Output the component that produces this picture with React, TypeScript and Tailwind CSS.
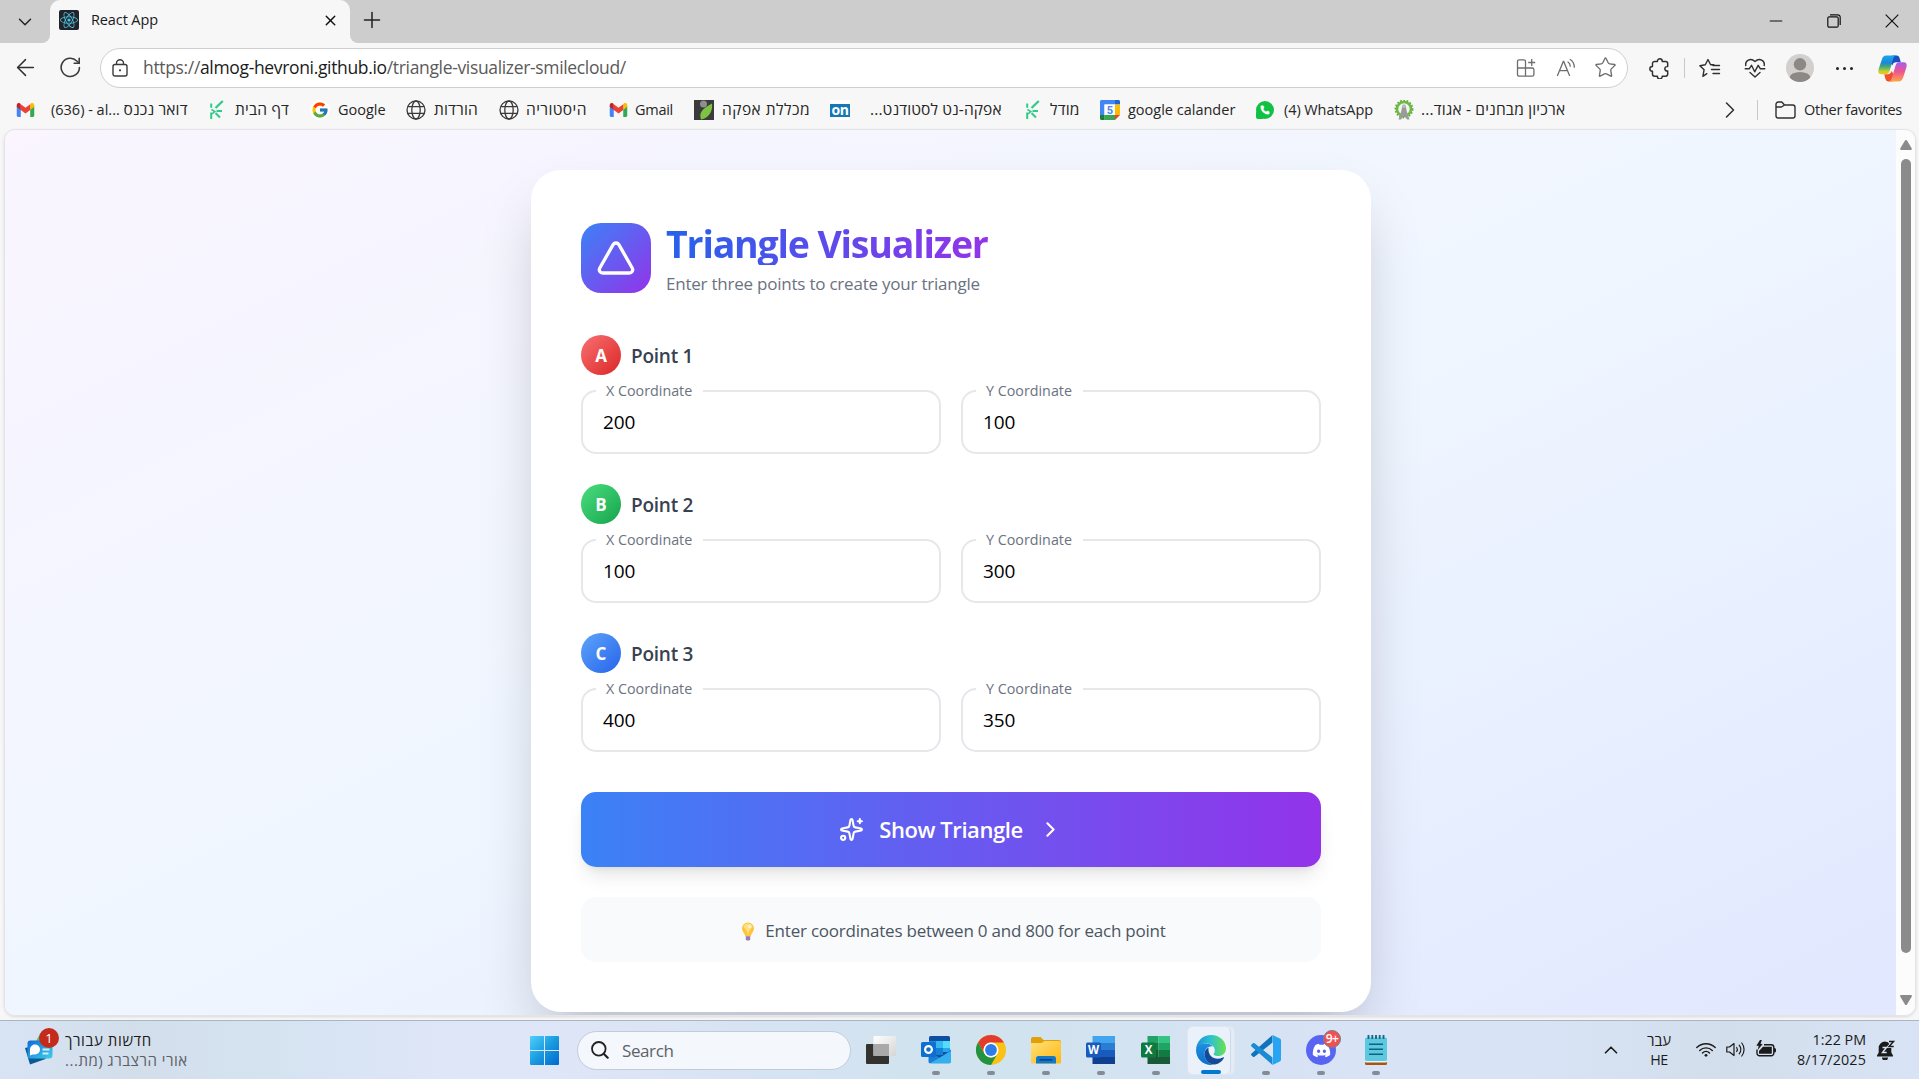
import type { ReactNode } from "react";
import { ArrowLeft, ChevronDown, ChevronRight, ChevronUp, Minus, Phone, Plus, Sparkles, Star, Triangle, X } from "lucide-react";
import { FcGoogle } from "react-icons/fc";
import { FaReact, FaDiscord } from "react-icons/fa";

/* ---------- small icons ---------- */

function GmailIcon() {
  return (
    <svg viewBox="0 0 20 16" className="h-[14px] w-[19px]">
      <path d="M0 3.5V14.4C0 15.3.7 16 1.5 16H4.6V6.5Z" fill="#4285f4" />
      <path d="M20 3.5V14.4c0 .9-.7 1.6-1.5 1.6h-3.1V6.5Z" fill="#34a853" />
      <path d="M15.4 1.4V8L20 4.4V2.3C20 .4 17.700-.7 16.200.5Z" fill="#fbbc04" />
      <path d="M4.600 8V1.400L10 5.500l5.400-4.100V8L10 12.100Z" fill="#ea4335" />
      <path d="M0 2.300v2.100L4.600 8V1.400L3.800.700C2.200-.6 0 .4 0 2.300Z" fill="#c5221f" />
    </svg>
  );
}

function SproutIcon() {
  return (
    <svg viewBox="0 0 16 20" className="h-[20px] w-[16px]" fill="none" stroke="#2ecc86">
      <path d="M13.800 1 6.500 8" strokeWidth="2.300" />
      <path d="M2.200 3.500v4.300M2.200 12.500v6.500" strokeWidth="2" />
      <path d="M7.500 11h5.500M6.500 13l4.500 4.500" strokeWidth="2" />
      <path d="M2.500 9.500 5.800 11.500 3 14" strokeWidth="1.600" />
    </svg>
  );
}

function GlobeIcon() {
  return (
    <svg viewBox="0 0 20 20" className="size-[20px]" fill="none" stroke="#3a3a3a" strokeWidth="1.300">
      <circle cx="10" cy="10" r="9" />
      <ellipse cx="10" cy="10" rx="4.200" ry="9" />
      <path d="M2 6.600h16M2 13.400h16" />
    </svg>
  );
}

function LeafIcon() {
  return (
    <svg viewBox="0 0 20 20" className="size-[20px]">
      <rect width="20" height="20" fill="#3b3b3b" />
      <circle cx="9.500" cy="4" r="3.500" fill="#8e8e8e" />
      <path d="M18 3.500C19 11 15 18 7 19.500 4.500 12 9 8.500 18 3.500Z" fill="#7dc242" />
    </svg>
  );
}

function OnIcon() {
  return (
    <span className="flex h-[20px] w-[20px] items-center bg-white">
      <span className="flex h-[13px] w-[20px] items-center justify-center bg-[#1579b8] pb-px text-[14px] leading-none font-bold tracking-[-0.5px] text-white">on</span>
    </span>
  );
}

function CalendarIcon() {
  return (
    <svg viewBox="0 0 20 20" className="size-[20px]">
      <path d="M1.500 0H15v4.500H4.500V15H0V1.500C0 .7.700 0 1.500 0Z" fill="#4285f4" />
      <path d="M15 0h3.500c.8 0 1.500.700 1.500 1.500V4.500h-5Z" fill="#1967d2" />
      <path d="M15 4.500h5V15h-5Z" fill="#fbbc04" />
      <path d="M4.500 15H15v5H4.500Z" fill="#34a853" />
      <path d="M0 15h4.500v5h-3C.700 20 0 19.300 0 18.500Z" fill="#188038" />
      <path d="M15 15h5l-5 5Z" fill="#ea4335" />
      <rect x="4.500" y="4.500" width="10.500" height="10.500" fill="#fff" />
      <text x="9.800" y="13.600" textAnchor="middle" fontSize="11" fontWeight="700" fill="#4285f4" fontFamily="Roboto, sans-serif">5</text>
    </svg>
  );
}

function WhatsAppIcon() {
  return (
    <span className="relative flex size-[18px] items-center justify-center rounded-full bg-[#12c144]">
      <span className="absolute bottom-0 left-0 size-[8px] rounded-[2px] bg-[#12c144]" />
      <Phone className="relative size-[10px] text-white" fill="currentColor" strokeWidth={1.500} />
    </span>
  );
}

function WreathIcon() {
  return (
    <svg viewBox="0 0 20 20" className="size-[20px]">
      <circle cx="10" cy="9" r="7" fill="#f4f8f0" stroke="#6dbb45" strokeWidth="2.600" />
      <circle cx="10" cy="9" r="8.600" fill="none" stroke="#5fae3c" strokeWidth="1.600" strokeDasharray="1.800 1.500" />
      <path d="M8.300 5.500h3.400l1 5.500L15.500 19.500H13L10 15l-3 4.500H4.500L7.300 11Z" fill="#9a9a9a" />
      <circle cx="10" cy="6.200" r="1.900" fill="#bcbcbc" />
    </svg>
  );
}

function ReloadIcon() {
  return (
    <svg viewBox="0 0 20 20" className="size-[21px]" fill="none" stroke="#3b3b3b" strokeWidth="1.500" strokeLinecap="round" strokeLinejoin="round">
      <path d="M18.500 10A8.700 8.700 0 1 1 16 3.800L18.300 6" />
      <path d="M18.300 1.200V6h-4.800" />
    </svg>
  );
}

function LockIcon() {
  return (
    <svg viewBox="0 0 16 18" className="h-[18px] w-[16px]" fill="none" stroke="#3b3b3b" strokeWidth="1.400">
      <rect x="1" y="5.500" width="14" height="11.500" rx="2" />
      <path d="M4.500 5.500V4.300a3.500 3.500 0 0 1 7 0v1.200" />
      <circle cx="8" cy="11.300" r="1.100" fill="#3b3b3b" stroke="none" />
    </svg>
  );
}

function AppsIcon() {
  return (
    <svg viewBox="0 0 20 20" className="size-[20px]" fill="none" stroke="#6e6e6e" strokeWidth="1.300">
      <path d="M9.500 10V3.500A1.700 1.700 0 0 0 7.800 1.800H3.200A1.700 1.700 0 0 0 1.500 3.500v13a1.700 1.700 0 0 0 1.700 1.700h13a1.700 1.700 0 0 0 1.700-1.700v-4.800A1.700 1.700 0 0 0 16.200 10H1.500M9.500 10v8.200" />
      <path d="M15.700 1v7M12.200 4.500h7" />
    </svg>
  );
}

function ReadAloudIcon() {
  return (
    <svg viewBox="0 0 20 20" className="size-[20px]" fill="none" stroke="#6e6e6e" strokeWidth="1.300" strokeLinecap="round">
      <path d="M1.500 17.500 7.300 3.500h.4l5.800 14M3.600 12.700h7.800" />
      <path d="M12 4c1.500 1 2.200 2.400 2.300 4.200M14.200 1.500c2.700 1.700 4.100 4.500 4.100 7.700" />
    </svg>
  );
}

function PuzzleIcon() {
  return (
    <svg viewBox="0 0 20 20" className="size-[21px]" fill="none" stroke="#303030" strokeWidth="1.400" strokeLinejoin="round">
      <path d="M8 3.300V3a2.300 2.300 0 0 1 4.600 0v.300h3.200a2 2 0 0 1 2 2v2.900h-.6a2.100 2.100 0 0 0 0 4.200h.6v2.900a2 2 0 0 1-2 2h-3.200v.3a2.300 2.300 0 0 1-4.600 0v-.3H5.300a2 2 0 0 1-2-2v-2.700h-.2a2.300 2.300 0 0 1 0-4.600h.2V5.300a2 2 0 0 1 2-2Z" />
    </svg>
  );
}

function FavoritesIcon() {
  return (
    <svg viewBox="0 0 22 20" className="h-[20px] w-[22px]" fill="none" stroke="#303030" strokeWidth="1.400" strokeLinejoin="round" strokeLinecap="round">
      <path d="M7.800 15.700 3.900 18.300l1.200-6.600L.9 7.700l5.400-.9L9 1.500l2.600 5.300h3.200" />
      <path d="M14 7.500h6.500M12.500 11.500h8M14 15.500h6.500" />
    </svg>
  );
}

function HeartPulseIcon() {
  return (
    <svg viewBox="0 0 22 20" className="h-[20px] w-[22px]" fill="none" stroke="#303030" strokeWidth="1.400" strokeLinejoin="round" strokeLinecap="round">
      <path d="M1.800 7.500C.8 2.500 6.500-.7 11 3.500c4.500-4.200 10.200-1 9.200 4M6 14.500l5 4.500 5-4.500" />
      <path d="M1.200 10.800h4l2.300-3.500 3.200 6.500 3.500-6.500 2.200 3.500h4.400" />
    </svg>
  );
}

function AvatarIcon() {
  return (
    <svg viewBox="0 0 28 28" className="size-[28px]">
      <clipPath id="avatar"><circle cx="14" cy="14" r="14" /></clipPath>
      <g clipPath="url(#avatar)">
        <rect width="28" height="28" fill="#d2d0ce" />
        <circle cx="14" cy="10.300" r="6.200" fill="#8c8886" />
        <ellipse cx="14" cy="23.500" rx="10.300" ry="5.500" fill="#8c8886" />
      </g>
    </svg>
  );
}

function CopilotIcon() {
  return (
    <svg viewBox="0 0 28 26" className="h-[27px] w-[29px]">
      <defs>
        <linearGradient id="cpA" x1="0" y1="0" x2="0" y2="1">
          <stop offset="0" stopColor="#1aa7ee" /><stop offset=".4" stopColor="#1c86d8" /><stop offset=".6" stopColor="#45ab72" /><stop offset=".85" stopColor="#c5cf2e" /><stop offset="1" stopColor="#f5c518" />
        </linearGradient>
        <linearGradient id="cpB" x1="0" y1="0" x2="0" y2="1">
          <stop offset="0" stopColor="#a45cf0" /><stop offset=".5" stopColor="#f0558e" /><stop offset="1" stopColor="#fba54a" />
        </linearGradient>
      </defs>
      <path d="M14 .5h4c1.600 0 2.400 1 2.900 2.600L22 7h-4.500c-2 0-3 1-3.600 3L11.500 7Z" fill="#1b4fc4" />
      <path d="M14 25.500h-4c-1.600 0-2.400-1-2.900-2.600L6 18.500h3.500c2 0 3-1 3.600-3L16 20Z" fill="#f0502e" />
      <path d="M8 .5h9.500c-1.500.3-2.300 1.400-2.800 3l-3.500 12c-.6 2-1.700 3-3.600 3H3.200C.6 18.500-.1 16.500.5 14L3.800 4C4.500 1.700 5.800.5 8 .5Z" fill="url(#cpA)" />
      <path d="M20 25.500h-9.500c1.500-.3 2.300-1.400 2.800-3l3.500-12c.6-2 1.700-3.500 3.600-3.500h4.400c2.600 0 3.300 2 2.700 4.500L24.200 22c-.7 2.300-2 3.500-4.200 3.500Z" fill="url(#cpB)" />
    </svg>
  );
}

/* ---------- browser chrome ---------- */

function TabStrip() {
  return (
    <div className="flex h-[43px] shrink-0 bg-[#cdcdcd]">
      <div className="flex w-[50px] items-center justify-center">
        <ChevronDown className="size-[22px] text-[#222]" strokeWidth={1.600} />
      </div>
      <div className="relative flex h-[43px] w-[300px] rounded-t-[10px] bg-[#f7f7f7] pl-[9px]">
        <span className="absolute bottom-0 left-[-8px] size-[8px] bg-[#f7f7f7]"><span className="block size-full rounded-br-[8px] bg-[#cdcdcd]" /></span>
        <span className="absolute right-[-8px] bottom-0 size-[8px] bg-[#f7f7f7]"><span className="block size-full rounded-bl-[8px] bg-[#cdcdcd]" /></span>
        <span className="mt-[10px] flex size-[20px] items-center justify-center rounded-[2px] bg-[#20232a]">
          <FaReact className="size-[18px] text-[#53c1de]" />
        </span>
        <span className="ml-[12px] h-[40px] w-[67px] text-[14.5px] leading-[40px] tracking-[-0.11px] whitespace-nowrap text-[#1b1b1b]">React App</span>
        <X className="mt-[12px] ml-[164px] size-[17px] text-[#111]" strokeWidth={2} />
      </div>
      <div className="ml-[9px] flex h-[39px] items-center">
        <Plus className="size-[26px] text-[#222]" strokeWidth={1.400} />
      </div>
      <div className="ml-auto flex h-[42px] items-center pr-[20px] text-[#111]">
        <Minus className="mr-[41px] size-[20px]" strokeWidth={1.300} />
        <svg viewBox="0 0 14 14" className="mr-[44px] size-[14px]" fill="none" stroke="currentColor" strokeWidth="1.200">
          <rect x=".8" y="2.800" width="10.400" height="10.400" rx="1.500" />
          <path d="M3 .8h7.700a2.500 2.500 0 0 1 2.500 2.500V11" />
        </svg>
        <svg viewBox="0 0 14 14" className="size-[14px]" stroke="currentColor" strokeWidth="1.200"><path d="m.7.700 12.600 12.600M13.300.7.700 13.300" /></svg>
      </div>
    </div>
  );
}

function Toolbar() {
  return (
    <div className="flex h-[50px] shrink-0 items-center pl-[12px]">
      <ArrowLeft className="mb-px size-[27px] text-[#303030]" strokeWidth={1.300} />
      <span className="mb-px ml-[21px]"><ReloadIcon /></span>
      <div className="ml-[19px] flex h-[40px] w-[1528px] items-center rounded-full border border-[#cfcfcf] bg-white pb-px pl-[11px]">
        <LockIcon />
        <span className="ml-[15px] grow text-[17.5px] tracking-[-0.34px] whitespace-nowrap text-[#5a5a5a]">
          https://<span className="text-[#1b1b1b]">almog-hevroni.github.io</span>/triangle-visualizer-smilecloud/
        </span>
        <AppsIcon />
        <span className="ml-[20px]"><ReadAloudIcon /></span>
        <Star className="mr-[10px] ml-[18px] size-[23px] text-[#6e6e6e]" strokeWidth={1.400} />
      </div>
      <span className="ml-[21px]"><PuzzleIcon /></span>
      <span className="ml-[14px] h-[20px] w-px bg-[#c8c8c8]" />
      <span className="ml-[14px]"><FavoritesIcon /></span>
      <span className="ml-[23px]"><HeartPulseIcon /></span>
      <span className="ml-[20px]"><AvatarIcon /></span>
      <span className="ml-[22px] flex w-[17px] justify-between">
        <i className="size-[3px] rounded-full bg-[#222]" /><i className="size-[3px] rounded-full bg-[#222]" /><i className="size-[3px] rounded-full bg-[#222]" />
      </span>
      <span className="ml-[25px]"><CopilotIcon /></span>
    </div>
  );
}

type Bookmark = { icon: ReactNode; text: ReactNode; slot: string; label: string };

const bookmarks: Bookmark[] = [
  { icon: <GmailIcon />, text: <>(636) - al... <span className="text-[15.5px] tracking-[0.15px]">דואר נכנס</span></>, slot: "w-[192px]", label: "ml-[16px]" },
  { icon: <SproutIcon />, text: "דף הבית", slot: "w-[103px]", label: "ml-[8px] text-[15.5px] tracking-[0.2px]" },
  { icon: <span className="flex size-[20px] items-center justify-center rounded-full bg-white"><FcGoogle className="size-[18px]" /></span>, text: "Google", slot: "w-[96px]", label: "ml-[8px]" },
  { icon: <GlobeIcon />, text: "הורדות", slot: "w-[93px]", label: "ml-[8px] text-[15.5px] tracking-[0.16px]" },
  { icon: <GlobeIcon />, text: "היסטוריה", slot: "w-[109px]", label: "ml-[7px] text-[15.5px] tracking-[0.4px]" },
  { icon: <GmailIcon />, text: "Gmail", slot: "w-[86px]", label: "ml-[7px] tracking-[-0.27px]" },
  { icon: <LeafIcon />, text: "מכללת אפקה", slot: "w-[136px]", label: "ml-[8px] text-[15.5px] tracking-[0.47px]" },
  { icon: <OnIcon />, text: "אפקה-נט לסטודנט...", slot: "w-[193px]", label: "ml-[20px] text-[15.5px] tracking-[0.12px]" },
  { icon: <SproutIcon />, text: "מודל", slot: "w-[77px]", label: "ml-[7px] text-[15.5px] tracking-[0.2px]" },
  { icon: <CalendarIcon />, text: "google calander", slot: "w-[155px]", label: "ml-[8px]" },
  { icon: <WhatsAppIcon />, text: "(4) WhatsApp", slot: "w-[139px]", label: "ml-[9px] tracking-[-0.08px]" },
  { icon: <WreathIcon />, text: "ארכיון מבחנים - אגוד...", slot: "w-[200px]", label: "ml-[7px] text-[15.5px] tracking-[0.19px]" },
];

function BookmarksBar() {
  return (
    <div className="flex h-[36px] shrink-0 items-center pb-[2px] pl-[15px] text-[14.5px] whitespace-nowrap text-[#262626]">
      {bookmarks.map((b, i) => (
        <div key={i} className={`flex shrink-0 items-center ${b.slot}`}>
          <span className="flex w-[20px] shrink-0 justify-center">{b.icon}</span>
          <span dir="auto" className={b.label}>{b.text}</span>
        </div>
      ))}
      <div className="ml-auto flex items-center pr-[17px]">
        <ChevronRight className="size-[28px] text-[#303030]" strokeWidth={1.300} />
        <span className="ml-[13px] h-[20px] w-px bg-[#c8c8c8]" />
        <svg viewBox="0 0 21 18" className="mr-[8px] ml-[17px] h-[18px] w-[21px]" fill="none" stroke="#303030" strokeWidth="1.400" strokeLinejoin="round">
          <path d="M1 4V3.200A2.200 2.200 0 0 1 3.200 1h3.600l2.700 3h8.300A2.200 2.200 0 0 1 20 6.200v8.600a2.200 2.200 0 0 1-2.200 2.200H3.200A2.200 2.200 0 0 1 1 14.800V4ZM1 6h5.500l3-2" />
        </svg>
        <span className="w-[98px] tracking-[-0.26px]">Other favorites</span>
      </div>
    </div>
  );
}

/* ---------- page ---------- */

function CoordinateField({ label, value }: { label: string; value: number }) {
  return (
    <div className="relative flex h-[64px] w-[360px] items-center rounded-[15px] border-2 border-[#e5e7eb] bg-white pt-[1px] pl-[20px]">
      <span className="absolute top-[-12px] left-[13px] w-[107px] bg-white pl-[10px] text-[14.3px] leading-[22px] whitespace-nowrap text-[#6b7280]">{label}</span>
      <span className="text-[19px] tracking-[-0.1px] text-black">{value}</span>
    </div>
  );
}

const points = [
  { letter: "A", name: "Point 1", x: 200, y: 100, color: "bg-linear-to-br/srgb from-[#f87171] to-[#dc2626]" },
  { letter: "B", name: "Point 2", x: 100, y: 300, color: "bg-linear-to-br/srgb from-[#4ade80] to-[#16a34a]" },
  { letter: "C", name: "Point 3", x: 400, y: 350, color: "bg-linear-to-br/srgb from-[#60a5fa] to-[#2563eb]" },
];

function Bulb() {
  return (
    <svg viewBox="0 0 24 20" className="h-[20px] w-[24px]">
      <path d="M12 1.500a6 6 0 0 0-6 6c0 3 2.800 4.800 3.400 8h5.200c.6-3.200 3.400-5 3.400-8a6 6 0 0 0-6-6Z" fill="#fcc53c" />
      <path d="M12 2.500a5 5 0 0 0-4.500 3c1 3 3.500 2 4.500 9 1-7 3.500-6 4.500-9a5 5 0 0 0-4.500-3Z" fill="#ffdf7e" />
      <circle cx="13.500" cy="5.500" r="1.600" fill="#fff6d5" />
      <path d="M9.800 15.300h4.400v3c0 .7-.6 1.200-1.300 1.200h-1.800c-.7 0-1.300-.5-1.300-1.200Z" fill="#9a7bb5" />
    </svg>
  );
}

function TriangleCard() {
  return (
    <div className="h-[842px] w-[840px] shrink-0 rounded-[30px] bg-white px-[50px] pt-[53px] shadow-[0_31px_62px_-15px_rgba(0,0,0,0.25)]">
      <div className="flex h-[70px]">
        <div className="flex size-[70px] items-center justify-center rounded-[20px] bg-linear-to-br/srgb from-[#3b82f6] to-[#9333ea]">
          <Triangle className="size-[40px] text-white" strokeWidth={2} />
        </div>
        <div className="mt-[-1px] ml-[15px] w-[322px]">
          <h1 className="h-[43px] bg-linear-to-r/srgb from-[#2563eb] to-[#9333ea] bg-clip-text text-[37.5px] leading-[44px] font-bold tracking-[-1.18px] whitespace-nowrap text-transparent">Triangle Visualizer</h1>
          <p className="mt-[6px] text-[17px] leading-[26px] tracking-[-0.225px] whitespace-nowrap text-[#6b7280]">Enter three points to create your triangle</p>
        </div>
      </div>
      <div className="mt-[42px] flex flex-col gap-[30px]">
        {points.map((p) => (
          <div key={p.letter}>
            <div className="flex h-[40px] items-center gap-[10px]">
              <span className={`flex size-[40px] items-center justify-center rounded-full pt-[2px] text-[17px] font-bold text-white ${p.color}`}>{p.letter}</span>
              <span className="pt-[2px] text-[19px] font-semibold tracking-[-0.25px] text-[#374151]">{p.name}</span>
            </div>
            <div className="mt-[15px] flex gap-[20px]">
              <CoordinateField label="X Coordinate" value={p.x} />
              <CoordinateField label="Y Coordinate" value={p.y} />
            </div>
          </div>
        ))}
      </div>
      <button className="mt-[40px] flex h-[75px] w-full items-center justify-center rounded-[15px] bg-linear-to-r/srgb from-[#3b82f6] to-[#9333ea] text-white shadow-[0_12px_19px_-4px_rgba(0,0,0,0.1),0_5px_8px_-5px_rgba(0,0,0,0.1)]">
        <Sparkles className="size-[25px]" strokeWidth={2} />
        <span className="ml-[15px] text-[22px] font-semibold tracking-[-0.42px]">Show Triangle</span>
        <ChevronRight className="ml-[15px] size-[25px]" strokeWidth={2} />
      </button>
      <div className="mt-[30px] flex h-[65px] items-center justify-center rounded-[15px] bg-[#f9fafb] pt-[2px]">
        <Bulb />
        <span className="ml-[5px] text-[17px] tracking-[-0.22px] text-[#4b5563]">Enter coordinates between 0 and 800 for each point</span>
      </div>
    </div>
  );
}

function Viewport() {
  return (
    <div className="mr-[3px] ml-[4px] flex h-[887px] shrink-0 overflow-hidden rounded-[11px] border border-[#e3e3e8] shadow-[0_1px_3px_rgba(0,0,0,0.12)]">
      <div className="h-[885px] grow overflow-hidden">
        <div className="flex h-[922px] justify-center bg-linear-to-br/srgb from-[#faf5ff] via-[#eff6ff] to-[#e0e7ff] pt-[40px] pl-px">
          <TriangleCard />
        </div>
      </div>
      <div className="flex w-[19px] flex-col items-center justify-between bg-[#fcfcfc] py-[10px]">
        <svg viewBox="0 0 12 10" className="h-[10px] w-[12px]"><path d="M6 0c.5 0 .8.200 1 .6l4.800 8c.3.700 0 1.400-.8 1.400H1c-.8 0-1.100-.7-.8-1.400l4.800-8C5.200.2 5.500 0 6 0Z" fill="#8b8b8b" /></svg>
        <div className="mt-[9px] mb-auto h-[794px] w-[10px] rounded-full bg-[#8b8b8b]" />
        <svg viewBox="0 0 12 10" className="h-[10px] w-[12px]"><path d="M6 10c.5 0 .8-.2 1-.6l4.800-8C12.100.7 11.800 0 11 0H1C.2 0-.1.700.2 1.400l4.800 8c.2.400.5.600 1 .6Z" fill="#8b8b8b" /></svg>
      </div>
    </div>
  );
}

/* ---------- taskbar ---------- */

function NewsIcon() {
  return (
    <svg viewBox="0 0 40 36" className="h-[36px] w-[40px]">
      <defs>
        <linearGradient id="newsA" x1="0" y1="0" x2="1" y2="1"><stop offset="0" stopColor="#0f6cd6" /><stop offset="1" stopColor="#3fd0e8" /></linearGradient>
      </defs>
      <path d="m14 12 4-7 8 5-2 8H14Z" fill="#5fc06a" />
      <path d="m3 19 4-1 3 9 14 1.500-.5 1.500L8 35.500Z" fill="#0b5a93" />
      <rect x="5.500" y="11.500" width="25" height="18" rx="3" fill="url(#newsA)" />
      <path d="M8 26.500v-6a5 5 0 1 1 5 5h-2.500Z" fill="#fff" />
      <path d="M20.500 20.500h7M20.500 24.500h6" stroke="#c9f1fb" strokeWidth="1.800" />
    </svg>
  );
}

function StartIcon() {
  return (
    <svg viewBox="0 0 29 29" className="size-[29px]">
      <defs>
        <linearGradient id="start" x1="0" y1="0" x2="29" y2="29" gradientUnits="userSpaceOnUse"><stop offset="0" stopColor="#4fd0fb" /><stop offset=".5" stopColor="#199be0" /><stop offset="1" stopColor="#0168ce" /></linearGradient>
      </defs>
      <path d="M1 0h13v14H0V1a1 1 0 0 1 1-1ZM15 0h13a1 1 0 0 1 1 1v13H15ZM0 15h14v14H1a1 1 0 0 1-1-1ZM15 15h14v13a1 1 0 0 1-1 1H15Z" fill="url(#start)" />
    </svg>
  );
}

function TaskViewIcon() {
  return (
    <svg viewBox="0 0 30 28" className="h-[28px] w-[30px]">
      <defs>
        <linearGradient id="tv" x1="0" y1="0" x2="1" y2="1"><stop offset="0" stopColor="#fff" /><stop offset="1" stopColor="#d5d5d5" /></linearGradient>
      </defs>
      <rect x="0" y="8" width="23" height="20" rx="1" fill="#33322f" />
      <rect x="7.500" y="0" width="22.500" height="20" rx="1" fill="url(#tv)" />
      <rect x="7.500" y="8" width="15.500" height="12" fill="#a9a9a9" />
    </svg>
  );
}

function OutlookIcon() {
  return (
    <svg viewBox="0 0 30 30" className="size-[30px]">
      <rect x="8" y="1" width="21" height="27" rx="1.500" fill="#0f4fa0" />
      <path d="M8 6h7v7H8z" fill="#1a8ae0" /><path d="M15 6h7v7h-7z" fill="#35b8f1" /><path d="M22 6h7v7h-7z" fill="#55dcfb" />
      <path d="M8 13h7v7H8z" fill="#0d62b8" /><path d="M15 13h7v7h-7z" fill="#1480d8" /><path d="M22 13h7v4h-7z" fill="#2aa5ea" />
      <path d="M7.500 16 19 23l11-8.500V26.500a1.700 1.700 0 0 1-1.700 1.700H9a1.500 1.500 0 0 1-1.500-1.500Z" fill="#1a7ed6" />
      <path d="M9 28.200 30 16v10.500a1.700 1.700 0 0 1-1.700 1.700Z" fill="#35b0ee" />
      <rect x="0" y="7" width="15" height="15" rx="1.500" fill="#0f6fd0" />
      <circle cx="7.500" cy="14.500" r="3.400" fill="none" stroke="#fff" strokeWidth="2.200" />
    </svg>
  );
}

function ChromeIcon() {
  return (
    <svg viewBox="0 0 30 30" className="size-[30px]">
      <circle cx="15" cy="15" r="15" fill="#fbc116" />
      <path d="M15 0A15 15 0 0 1 28 7.500H15A7.500 7.500 0 0 0 8.500 18.750L2 7.500A15 15 0 0 1 15 0Z" fill="#e33b2e" />
      <path d="M2 7.500 8.500 18.750A7.500 7.500 0 0 0 21.500 18.750L15 30A15 15 0 0 1 2 7.500Z" fill="#229342" />
      <circle cx="15" cy="15" r="7.500" fill="#fff" /><circle cx="15" cy="15" r="5.900" fill="#2f7be8" />
    </svg>
  );
}

function ExplorerIcon() {
  return (
    <svg viewBox="0 0 30 27" className="h-[27px] w-[30px]">
      <defs><linearGradient id="fold" x1="0" y1="0" x2="1" y2="1"><stop offset="0" stopColor="#ffe07a" /><stop offset="1" stopColor="#fdb813" /></linearGradient></defs>
      <path d="M0 2C0 .9.900 0 2 0h7.500l3 3H28a2 2 0 0 1 2 2v5H0Z" fill="#e0a008" />
      <path d="M0 6h10.500l3-2H28a2 2 0 0 1 2 2v19a1.500 1.500 0 0 1-1.500 1.500h-27A1.500 1.500 0 0 1 0 25Z" fill="url(#fold)" />
      <path d="M5 26.500v-5A2.500 2.500 0 0 1 7.500 19h15a2.500 2.500 0 0 1 2.500 2.500v5Z" fill="#1279c8" />
      <path d="M8.500 22.800h13" stroke="#0a3f86" strokeWidth="1.500" />
    </svg>
  );
}

function WordIcon() {
  return (
    <svg viewBox="0 0 30 28" className="h-[28px] w-[30px]">
      <path d="M6.500 0h22.500v7H6.500z" fill="#41a5ee" /><path d="M6.500 7h22.500v7H6.500z" fill="#2b7cd3" />
      <path d="M6.500 14h22.500v7H6.500z" fill="#185abd" /><path d="M6.500 21h22.500v7H6.500z" fill="#103f91" />
      <rect x="0" y="6.500" width="15" height="15" rx="1.500" fill="#185abd" />
      <text x="7.500" y="18" textAnchor="middle" fontSize="11.500" fontWeight="700" fill="#fff" fontFamily="Open Sans, sans-serif">W</text>
    </svg>
  );
}

function ExcelIcon() {
  return (
    <svg viewBox="0 0 30 28" className="h-[28px] w-[30px]">
      <path d="M6.500 0h11v7h-11z" fill="#21a366" /><path d="M17.500 0h11.500v7H17.500z" fill="#33c481" />
      <path d="M6.500 7h11v7h-11z" fill="#107c41" /><path d="M17.500 7h11.500v7H17.500z" fill="#21a366" />
      <path d="M6.500 14h11v7h-11z" fill="#185c37" /><path d="M17.500 14h11.500v7H17.500z" fill="#107c41" />
      <path d="M6.500 21h22.500v7H6.500z" fill="#185c37" />
      <rect x="0" y="6.500" width="15" height="15" rx="1.500" fill="#0f7a40" />
      <text x="7.500" y="18" textAnchor="middle" fontSize="11.500" fontWeight="700" fill="#fff" fontFamily="Open Sans, sans-serif">X</text>
    </svg>
  );
}

function EdgeIcon() {
  return (
    <svg viewBox="0 0 30 30" className="size-[30px]">
      <defs>
        <linearGradient id="edA" x1="0" y1=".4" x2="1" y2=".4"><stop offset="0" stopColor="#1b8fd8" /><stop offset=".5" stopColor="#2fc2cf" /><stop offset="1" stopColor="#6be24a" /></linearGradient>
        <linearGradient id="edB" x1="0" y1="0" x2="0" y2="1"><stop offset="0" stopColor="#1d8fe0" /><stop offset="1" stopColor="#0c6fce" /></linearGradient>
      </defs>
      <path d="M0 14.500C.5 6 7 0 15 0c9 0 15 6.500 15 13.200 0 5-3.800 7.800-8 7.800-3.500 0-4.700-1.400-4.300-2.300.8-1 1.100-2 1.100-3.200C18.800 11 14.500 8.500 10 8.500 5 8.500 1.500 11 0 14.500Z" fill="url(#edA)" />
      <path d="M0 15c.5-4.500 5-6.500 9.500-6.500 3 0 6 1 7.700 3-5-1-8.700 3-8.700 7.500 0 5.500 4 9.700 9 10.800C7.500 31 0 24 0 15Z" fill="url(#edB)" />
      <path d="M12.500 12.500c-2.500 1.500-4 3.800-4 6.500 0 6 5 11 10.500 10.500 4-.7 7-3.200 8.800-6.300.4-.8-.3-1.200-1-.8-6 3.100-15.300.6-14.300-9.900Z" fill="#124a97" />
    </svg>
  );
}

function VsCodeIcon() {
  return (
    <svg viewBox="0 0 30 30" className="size-[30px]">
      <path d="M21.500 7.500 3.500 21.800c-.5.400-1 .4-1.500 0L.5 20.400c-.6-.5-.6-1.200 0-1.800L21.500 0Z" fill="#0f74ba" />
      <path d="M21.500 22.500 3.500 8.200c-.5-.4-1-.4-1.500 0L.5 9.600c-.6.500-.6 1.200 0 1.800L21.500 30Z" fill="#1a8ad4" />
      <path d="M21.500 30 28.800 26.500c.7-.4 1.200-1 1.200-1.900V5.400c0-.9-.5-1.500-1.200-1.900L21.500 0c.4.300.5.700.5 1.200v27.600c0 .5-.1.900-.5 1.200Z" fill="#27a4f2" />
    </svg>
  );
}

function DiscordIcon() {
  return (
    <span className="relative flex size-[30px] items-center justify-center rounded-full bg-[#5865f2]">
      <FaDiscord className="size-[19px] text-white" />
      <span className="absolute top-[-5px] left-[17px] flex size-[18px] items-center justify-center rounded-full border border-[#7d7d85] bg-[#ef5152] text-[12px] leading-none font-semibold tracking-[-0.5px] text-white">9+</span>
    </span>
  );
}

function NotepadIcon() {
  return (
    <svg viewBox="0 0 22 30" className="h-[30px] w-[22px]">
      <rect x="0" y="24" width="22" height="6" rx="1.500" fill="#a4550e" />
      <rect x="0" y="22" width="22" height="5.500" rx="1" fill="#f2f2f2" />
      <rect x="0" y="2.500" width="22" height="23.500" rx="1.500" fill="#5cc9e0" />
      <path d="M3.500 0v4M7.300 0v4M11 0v4M14.700 0v4M18.500 0v4" stroke="#146a86" strokeWidth="1.900" />
      <path d="M4 9.200h14M4 14.200h14M4 19.200h14" stroke="#10627d" strokeWidth="1.500" />
    </svg>
  );
}

const apps: { icon: ReactNode; active?: boolean }[] = [
  { icon: <OutlookIcon /> },
  { icon: <ChromeIcon /> },
  { icon: <ExplorerIcon /> },
  { icon: <WordIcon /> },
  { icon: <ExcelIcon /> },
  { icon: <EdgeIcon />, active: true },
  { icon: <VsCodeIcon /> },
  { icon: <DiscordIcon /> },
  { icon: <NotepadIcon /> },
];

function TrayIcons() {
  return (
    <div className="flex items-center text-[#1b1b1b]">
      <svg viewBox="0 0 20 15" className="mb-px h-[15px] w-[20px]" fill="none" stroke="currentColor" strokeWidth="1.400" strokeLinecap="round">
        <path d="M.8 5.600a13 13 0 0 1 18.400 0M3.700 8.400a9 9 0 0 1 12.600 0M6.500 11a5 5 0 0 1 7 0" />
        <circle cx="10" cy="13.300" r="1.400" fill="currentColor" stroke="none" />
      </svg>
      <svg viewBox="0 0 20 16" className="mb-px ml-[10px] h-[17px] w-[20px]" fill="none" stroke="currentColor" strokeWidth="1.200" strokeLinecap="round" strokeLinejoin="round">
        <path d="M.8 5.500v5h2.700L8 14V2L3.500 5.500Z" />
        <path d="M10.700 6a3.500 3.500 0 0 1 0 4M13.200 3.700a7 7 0 0 1 0 8.600M15.800 1.500a10.500 10.500 0 0 1 0 13" />
      </svg>
      <svg viewBox="0 0 20 17" className="mb-[3px] ml-[10px] h-[17px] w-[20px]">
        <path d="M8 4.700h7.300a2.500 2.500 0 0 1 2.500 2.500v6a2.500 2.500 0 0 1-2.500 2.500H3.500A2.500 2.500 0 0 1 1 13.200V9.500" fill="none" stroke="currentColor" strokeWidth="1.400" />
        <path d="M3 13.700V11l4-4.300h8.800v7Z" fill="currentColor" />
        <path d="M18 8h.5A1.500 1.500 0 0 1 20 9.500V11a1.500 1.500 0 0 1-1.500 1.500H18Z" fill="currentColor" />
        <path d="M4 0 .3 5.700h2.400L1.700 10 6.700 4H4.500L5.800 0Z" fill="currentColor" />
      </svg>
    </div>
  );
}

function Taskbar() {
  return (
    <div className="flex h-[59px] shrink-0 items-center border-t border-[#abb4c3] bg-[linear-gradient(90deg,#d8e4f4_0%,#d3deeb_7%,#d5e3f1_14%,#dfe6f8_24%,#dfe6f7_28%,#d6e3f3_40%,#d0e3ee_50%,#d4e3f1_60%,#d8e3f5_70%,#d8e4f5_80%,#d3deec_90%,#d8e4f5_100%)] text-[#1b1b1b]">
      <div className="flex w-[530px] items-center pl-[22px]">
        <span className="relative mt-[-6px]">
          <NewsIcon />
          <span className="absolute top-[-1px] left-[17px] flex size-[20px] items-center justify-center rounded-full bg-[#c42b1c] text-[13px] leading-none text-white">1</span>
        </span>
        <div className="mb-px ml-[3px] w-[123px] text-left text-[15px] leading-[20px] whitespace-nowrap">
          <div className="tracking-[0.6px]">חדשות עבורך</div>
          <div dir="rtl" className="text-left tracking-[0.52px] text-[#5b6068]">אורי הרצברג (מת...</div>
        </div>
      </div>
      <StartIcon />
      <div className="ml-[18px] flex h-[39px] w-[274px] items-center rounded-full border border-[#c3cbdb] bg-[#f4f7fc] pl-[13px]">
        <svg viewBox="0 0 18 18" className="size-[18px]" fill="none" stroke="#222" strokeLinecap="round">
          <circle cx="7.800" cy="7.800" r="6.800" strokeWidth="1.800" /><path d="m12.700 12.700 4 4" strokeWidth="2.200" />
        </svg>
        <span className="ml-[13px] pt-px text-[17px] tracking-[-0.4px] text-[#5f6167]">Search</span>
      </div>
      <span className="ml-[15px]"><TaskViewIcon /></span>
      <div className="ml-[16px] flex gap-[7px]">
        {apps.map((a, i) => (
          <div key={i} className={a.active ? "relative flex h-[49px] w-[48px] items-center justify-center rounded-[5px] border border-[#dfe6f2] bg-[#e3ebf6]" : "relative flex h-[49px] w-[48px] items-center justify-center"}>
            {a.active && <span className="absolute inset-y-0 left-0 w-[43px] rounded-[5px] border-r border-[#cfd9e8] bg-[#ebf1fa]" />}
            <span className={a.active ? "relative -ml-[1px] flex" : "flex"}>{a.icon}</span>
            <span className={a.active ? "absolute bottom-0 left-[13px] h-[4px] w-[20px] rounded-full bg-[#0078d4]" : "absolute bottom-0 left-[20px] h-[4px] w-[8px] rounded-full bg-[#838b95]"} />
          </div>
        ))}
      </div>
      <div className="ml-auto flex items-center pr-[24px] text-[14.3px] leading-[20px]">
        <ChevronUp className="mr-[23px] size-[22px]" strokeWidth={1.800} />
        <div className="mb-px w-[28px] text-center">
          <div className="text-[15px]">עבר</div>
          <div className="tracking-[-0.5px]">HE</div>
        </div>
        <span className="ml-[23px]"><TrayIcons /></span>
        <div className="mb-px ml-[19px] w-[71px] text-right whitespace-nowrap">
          <div>1:22 PM</div>
          <div className="tracking-[0.14px]">8/17/2025</div>
        </div>
        <svg viewBox="0 0 18 20" className="mb-px ml-[11px] h-[20px] w-[18px]">
          <path d="M8 1.500A6.300 6.300 0 0 0 1.700 8v4.500L0 15.500V16.500h16v-1l-1.700-3V7L11 2.200Z" fill="#1b1b1b" />
          <path d="M5 17.500h6a3 3 0 0 1-6 0Z" fill="#1b1b1b" />
          <path d="M5.500 7.500h4L5.500 12.500h4.200" fill="none" stroke="#d9e4f4" strokeWidth="1.400" />
          <path d="M12 1.500h4.500L12 6.500h4.700" fill="none" stroke="#d9e4f4" strokeWidth="3" />
          <path d="M12 1.500h4.500L12 6.500h4.700" fill="none" stroke="#1b1b1b" strokeWidth="1.400" />
        </svg>
      </div>
    </div>
  );
}

export default function App() {
  return (
    <div className="flex h-[1079px] w-[1919px] flex-col overflow-hidden bg-[#f7f7f7] font-['Open_Sans','Noto_Sans',sans-serif]">
      <TabStrip />
      <Toolbar />
      <BookmarksBar />
      <Viewport />
      <div className="h-[4px] shrink-0" />
      <Taskbar />
    </div>
  );
}
